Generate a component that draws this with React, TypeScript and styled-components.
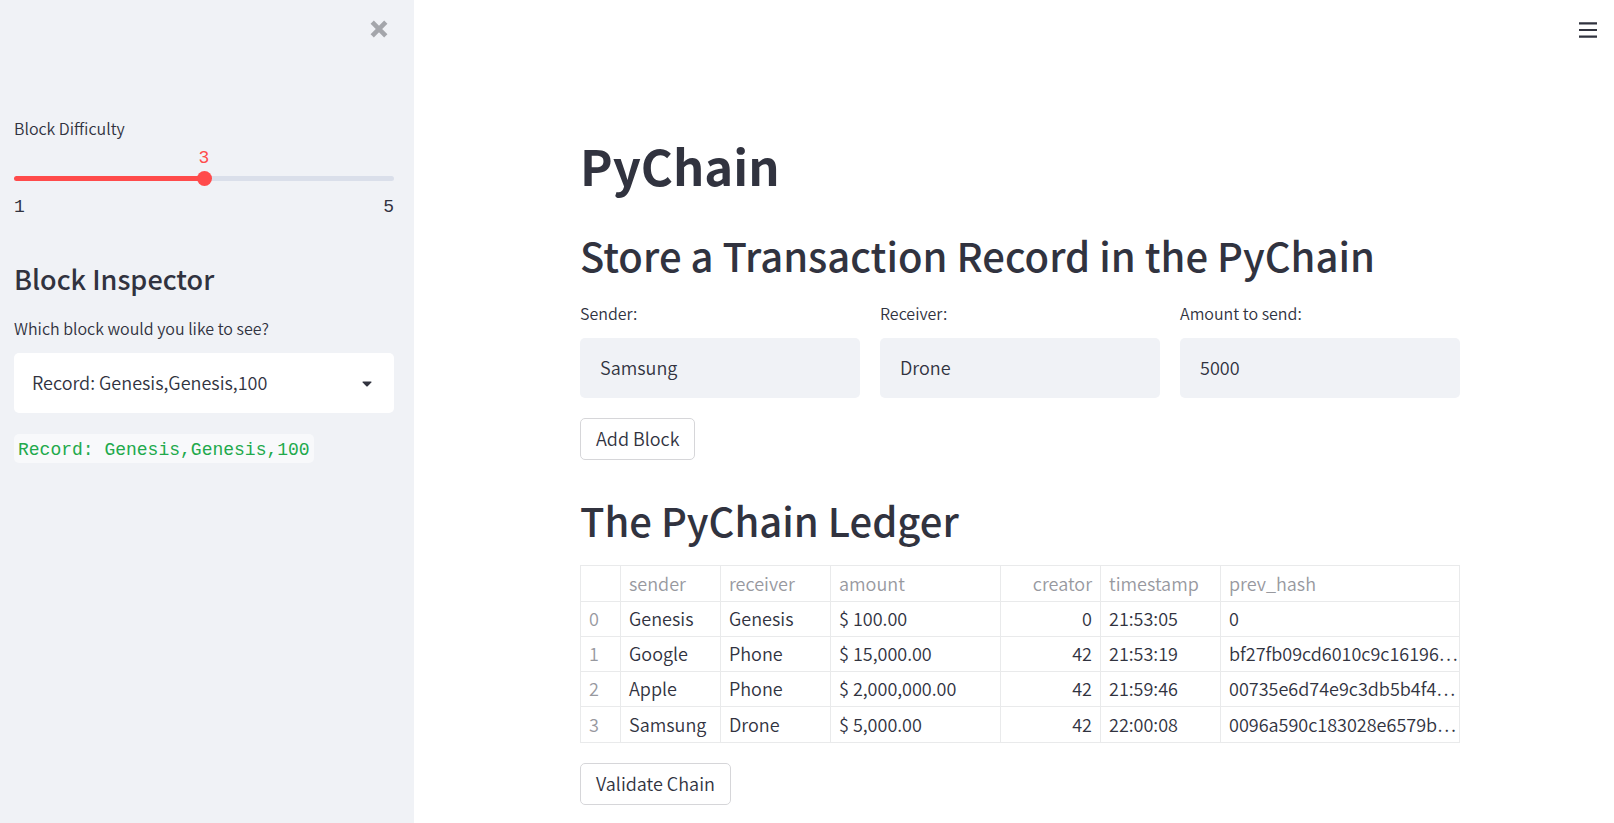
import React, { useState } from "react";
import styled, { createGlobalStyle } from "styled-components";

const sans = '"Noto Sans CJK KR", "Noto Sans", sans-serif';
const mono = '"Liberation Mono", monospace';

const color = {
  text: "#31333f",
  faded: "#98999f",
  panel: "#f0f2f6",
  primary: "#ff4b4b",
  track: "#dadfea",
  line: "#e9eaeb",
  border: "#d6d6d9",
  code: "#21a94b",
};

const GlobalStyle = createGlobalStyle`
  *, *::before, *::after { box-sizing: border-box; }
  body {
    margin: 0;
    background: #fff;
    color: ${color.text};
    font: 350 18px/24px ${sans};
  }
  button, input, select { font: inherit; color: inherit; }
`;

const Page = styled.div`
  display: flex;
  min-height: 100vh;
`;

const Sidebar = styled.aside`
  flex: 0 0 414px;
  padding: 0 20px 0 14px;
  background: ${color.panel};
`;

const SidebarTop = styled.div`
  display: flex;
  justify-content: flex-end;
  align-items: flex-start;
  height: 116px;
  padding-top: 14px;
`;

const IconButton = styled.button`
  display: grid;
  place-items: center;
  width: 30px;
  height: 30px;
  padding: 0;
  border: 0;
  background: none;
  cursor: pointer;
`;

const Label = styled.label`
  display: block;
  font-size: 16px;
  line-height: 24px;
`;

const SliderValue = styled.output`
  display: block;
  text-align: center;
  color: ${color.primary};
  font: 400 18px/22px ${mono};
  margin: 7px 0 2px;
`;

const Slider = styled.input<{ $fill: number }>`
  display: block;
  appearance: none;
  width: 100%;
  height: 15px;
  margin: 0;
  background: none;
  cursor: pointer;

  &::-webkit-slider-runnable-track {
    height: 5px;
    border-radius: 3px;
    background: linear-gradient(
      to right,
      ${color.primary} ${(p) => p.$fill}%,
      ${color.track} ${(p) => p.$fill}%
    );
  }
  &::-webkit-slider-thumb {
    appearance: none;
    width: 15px;
    height: 15px;
    margin-top: -5px;
    border-radius: 50%;
    background: ${color.primary};
  }
`;

const SliderRange = styled.div`
  display: flex;
  justify-content: space-between;
  margin-top: 10px;
  font: 400 18px/22px ${mono};
`;

const SidebarHeading = styled.h2`
  margin: 43px 0 19px;
  font-size: 27px;
  line-height: 36px;
  font-weight: 500;
`;

const SelectBox = styled.div`
  position: relative;
  margin-top: 13px;

  svg {
    position: absolute;
    right: 22px;
    top: 28px;
    pointer-events: none;
  }
`;

const Select = styled.select`
  display: block;
  appearance: none;
  width: 100%;
  height: 60px;
  padding: 0 48px 2px 18px;
  border: 0;
  border-radius: 5px;
  background: #fff;
`;

const Code = styled.code`
  display: inline-block;
  margin-top: 21px;
  padding: 4px 4px 1px;
  border-radius: 5px;
  background: #f8f9fb;
  color: ${color.code};
  font: 400 18px/24px ${mono};
`;

const Main = styled.main`
  position: relative;
  flex: 1;
  min-width: 0;
  padding: 135px 20px 16px 32px;
`;

const MenuButton = styled(IconButton)`
  position: absolute;
  top: 15px;
  right: 11px;
`;

const Content = styled.div`
  max-width: 880px;
  margin: 0 auto;
`;

const Title = styled.h1`
  margin: 0;
  font-size: 49px;
  line-height: 60px;
  font-weight: 700;
`;

const Heading = styled.h2`
  margin: 35px 0 0;
  font-size: 40px;
  line-height: 50px;
  font-weight: 500;
`;

const Fields = styled.div`
  display: grid;
  grid-template-columns: repeat(3, minmax(0, 1fr));
  gap: 20px;
  margin: 21px 0 20px;
`;

const TextInput = styled.input`
  display: block;
  width: 100%;
  height: 60px;
  margin-top: 13px;
  padding: 0 20px 2px;
  border: 0;
  border-radius: 5px;
  background: ${color.panel};
`;

const Button = styled.button`
  display: block;
  height: 42px;
  padding: 0 15px 2px;
  border: 1px solid ${color.border};
  border-radius: 5px;
  background: #fff;
  cursor: pointer;
`;

const Table = styled.table`
  width: 100%;
  margin: 20px 0;
  table-layout: fixed;
  border-collapse: collapse;
`;

const Cell = styled.td<{ $align?: "right" }>`
  height: 35px;
  padding: 0 ${(p) => (p.$align ? "8px" : "0")} 2px 8px;
  border: 1px solid ${color.line};
  font-weight: inherit;
  text-align: ${(p) => p.$align ?? "left"};
  white-space: nowrap;
  overflow: hidden;

  tr:last-child > & {
    height: 36px;
  }
`;

const HeadCell = styled(Cell)`
  color: ${color.faded};
`;

const IndexCell = styled(Cell)`
  color: ${color.faded};
`;

const columns = [
  { name: "", width: 40 },
  { name: "sender", width: 100 },
  { name: "receiver", width: 110 },
  { name: "amount", width: 170 },
  { name: "creator", width: 100 },
  { name: "timestamp", width: 120 },
  { name: "prev_hash", width: undefined },
];

const rows = [
  ["0", "Genesis", "Genesis", "$ 100.00", "0", "21:53:05", "0"],
  ["1", "Google", "Phone", "$ 15,000.00", "42", "21:53:19", "bf27fb09cd6010c9c16196…"],
  ["2", "Apple", "Phone", "$ 2,000,000.00", "42", "21:59:46", "00735e6d74e9c3db5b4f4…"],
  ["3", "Samsung", "Drone", "$ 5,000.00", "42", "22:00:08", "0096a590c183028e6579b…"],
];

const fields = [
  { id: "sender", label: "Sender:", value: "Samsung" },
  { id: "receiver", label: "Receiver:", value: "Drone" },
  { id: "amount", label: "Amount to send:", value: "5000" },
];

const CREATOR = 4;
const alignOf = (i: number) => (i === CREATOR ? ("right" as const) : undefined);

export default function App() {
  const [difficulty, setDifficulty] = useState(3);
  const [record, setRecord] = useState("Record: Genesis,Genesis,100");

  return (
    <Page lang="en">
      <GlobalStyle />
      <Sidebar>
        <SidebarTop>
          <IconButton aria-label="Close sidebar">
            <svg width="18" height="18" viewBox="0 0 18 18">
              <path d="M2.2 2.2 15.8 15.8M15.8 2.2 2.2 15.8" stroke="#a4a6ab" strokeWidth="4.6" />
            </svg>
          </IconButton>
        </SidebarTop>

        <Label htmlFor="difficulty">Block Difficulty</Label>
        <SliderValue htmlFor="difficulty">{difficulty}</SliderValue>
        <Slider
          id="difficulty"
          type="range"
          min={1}
          max={5}
          value={difficulty}
          $fill={(difficulty - 1) * 25}
          onChange={(e) => setDifficulty(Number(e.target.value))}
        />
        <SliderRange>
          <span>1</span>
          <span>5</span>
        </SliderRange>

        <SidebarHeading>Block Inspector</SidebarHeading>
        <Label htmlFor="block">Which block would you like to see?</Label>
        <SelectBox>
          <Select id="block" value={record} onChange={(e) => setRecord(e.target.value)}>
            <option>Record: Genesis,Genesis,100</option>
          </Select>
          <svg width="10" height="6" viewBox="0 0 10 6">
            <path d="M1 0.5h8q.8.2.3.9L5.7 5.3q-.7.6-1.4 0L.7 1.4Q.2.7 1 .5z" fill={color.text} />
          </svg>
        </SelectBox>
        <Code>{record}</Code>
      </Sidebar>

      <Main>
        <MenuButton aria-label="Main menu">
          <svg width="18" height="16" viewBox="0 0 18 16">
            <path d="M0 1.3h18M0 8h18M0 14.7h18" stroke={color.text} strokeWidth="2.2" />
          </svg>
        </MenuButton>
        <Content>
          <Title>PyChain</Title>
          <Heading>Store a Transaction Record in the PyChain</Heading>
          <Fields>
            {fields.map((f) => (
              <div key={f.id}>
                <Label htmlFor={f.id}>{f.label}</Label>
                <TextInput id={f.id} type="text" defaultValue={f.value} />
              </div>
            ))}
          </Fields>
          <Button>Add Block</Button>

          <Heading>The PyChain Ledger</Heading>
          <Table>
            <colgroup>
              {columns.map((c) => (
                <col key={c.name} width={c.width} />
              ))}
            </colgroup>
            <thead>
              <tr>
                {columns.map((c, i) => (
                  <HeadCell as="th" key={c.name} $align={alignOf(i)}>
                    {c.name}
                  </HeadCell>
                ))}
              </tr>
            </thead>
            <tbody>
              {rows.map(([index, ...values]) => (
                <tr key={index}>
                  <IndexCell as="th" scope="row">
                    {index}
                  </IndexCell>
                  {values.map((v, i) => (
                    <Cell key={i} $align={alignOf(i + 1)}>
                      {v}
                    </Cell>
                  ))}
                </tr>
              ))}
            </tbody>
          </Table>
          <Button>Validate Chain</Button>
        </Content>
      </Main>
    </Page>
  );
}
